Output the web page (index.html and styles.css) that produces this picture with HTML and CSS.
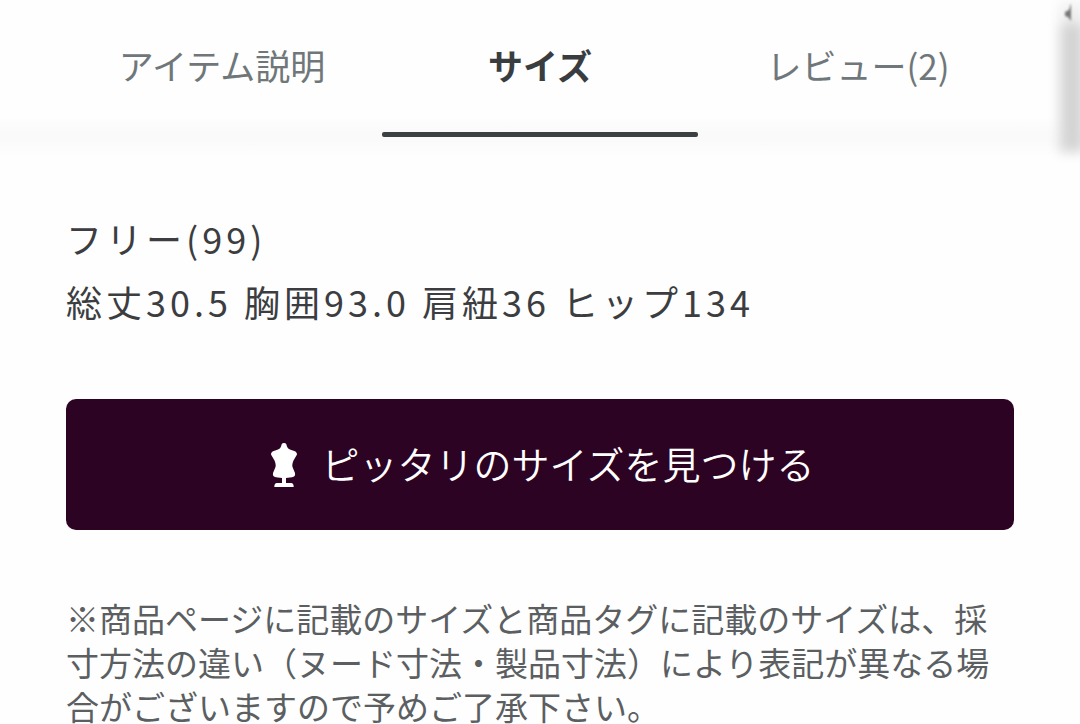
FILE: index.html
```html
<!DOCTYPE html>
<html lang="ja">
<head>
<meta charset="utf-8">
<meta name="viewport" content="width=device-width, initial-scale=1">
<title>サイズ</title>
<link rel="stylesheet" href="styles.css">
</head>
<body>
<nav class="tabs">
<a class="tab" href="#item">アイテム説明</a>
<a class="tab tab-active" href="#size" aria-current="page">サイズ</a>
<a class="tab" href="#review">レビュー(2)</a>
<span class="edge" aria-hidden="true"></span>
<svg class="edge-mark" viewBox="0 0 8 20" aria-hidden="true"><path d="M7 1v18l-3-4-3-1v-4l4-2z"/></svg>
</nav>
<main class="content" id="size">
<p class="measure">フリー(99)</p>
<p class="measure">総丈30.5 胸囲93.0 肩紐36 ヒップ134</p>
<button class="finder" type="button">
<svg class="mannequin" viewBox="0 0 28 46" aria-hidden="true"><path d="M14 1C12 1 11.500 2 11.200 4 10.500 6.500 9 7.200 6 8.200 2.500 9.200 1 10 1 12.500L4.500 18.500C5.500 21 6 23 5.500 25L3 31C2.500 33.500 3.500 34.800 6 35.200L12 36V41H7Q4.300 41 4.300 45H23.700Q23.700 41 21 41H16V36L22 35.200C24.500 34.800 25.500 33.500 25 31L22.500 25C22 23 22.500 21 23.500 18.500L27 12.500C27 10 25.500 9.200 22 8.200 19 7.200 17.500 6.500 16.800 4 16.500 2 16 1 14 1Z"/></svg>
<span>ピッタリのサイズを見つける</span>
</button>
<p class="note">※商品ページに記載のサイズと商品タグに記載のサイズは、採寸方法の違い（ヌード寸法・製品寸法）により表記が異なる場合がございますので予めご了承下さい。</p>
</main>
</body>
</html>
```
FILE: styles.css
```css
* { box-sizing: border-box; }
body {
  margin: 0;
  background: #fefefe;
  color: #3c3d40;
  font-family: "Noto Sans CJK JP", sans-serif;
}
.tabs {
  position: relative;
  display: grid;
  grid-template-columns: repeat(3, 1fr);
  gap: 2px;
  padding: 0 64px 20px;
  background: linear-gradient(to top, #fefefe, #fafafa 16px, #fafafa 24px, #fefefe 40px);
}
.tab {
  display: flex;
  flex-direction: column;
  gap: 2px;
  color: #70777a;
  font-size: 35px;
  line-height: 130px;
  text-align: center;
  text-decoration: none;
}
.tab::after {
  content: "";
  height: 5px;
  border-radius: 2px;
}
.tab-active {
  color: #3a3d40;
  font-weight: 700;
}
.tab-active::after { background: #3c4144; }
.edge {
  position: absolute;
  top: 24px;
  right: -4px;
  width: 24px;
  height: 128px;
  background: #d4d4d4;
  box-shadow: 0 -20px 4px #eee;
  filter: blur(6px);
  clip-path: inset(-60px 4px -20px -20px);
}
.edge-mark {
  position: absolute;
  top: 2px;
  right: 8px;
  width: 8px;
  height: 20px;
  fill: #777;
  filter: blur(1px);
}
.content { padding: 50px 66px 24px; }
.measure {
  margin: 0;
  font-size: 36px;
  line-height: 63px;
  letter-spacing: 4px;
}
.finder {
  display: flex;
  align-items: center;
  justify-content: center;
  gap: 24px;
  width: 100%;
  height: 131px;
  margin: 66px 0;
  padding: 0 0 0 4px;
  border: 0;
  border-radius: 10px;
  background: #2d0324;
  color: #fff;
  font-family: inherit;
  font-size: 38px;
  font-weight: 350;
  line-height: 52px;
}
.finder span { padding-bottom: 4px; }
.mannequin { width: 28px; height: 46px; fill: currentColor; }
.note {
  margin: 0;
  color: #5b5f62;
  font-size: 33px;
  line-height: 44px;
}
```
